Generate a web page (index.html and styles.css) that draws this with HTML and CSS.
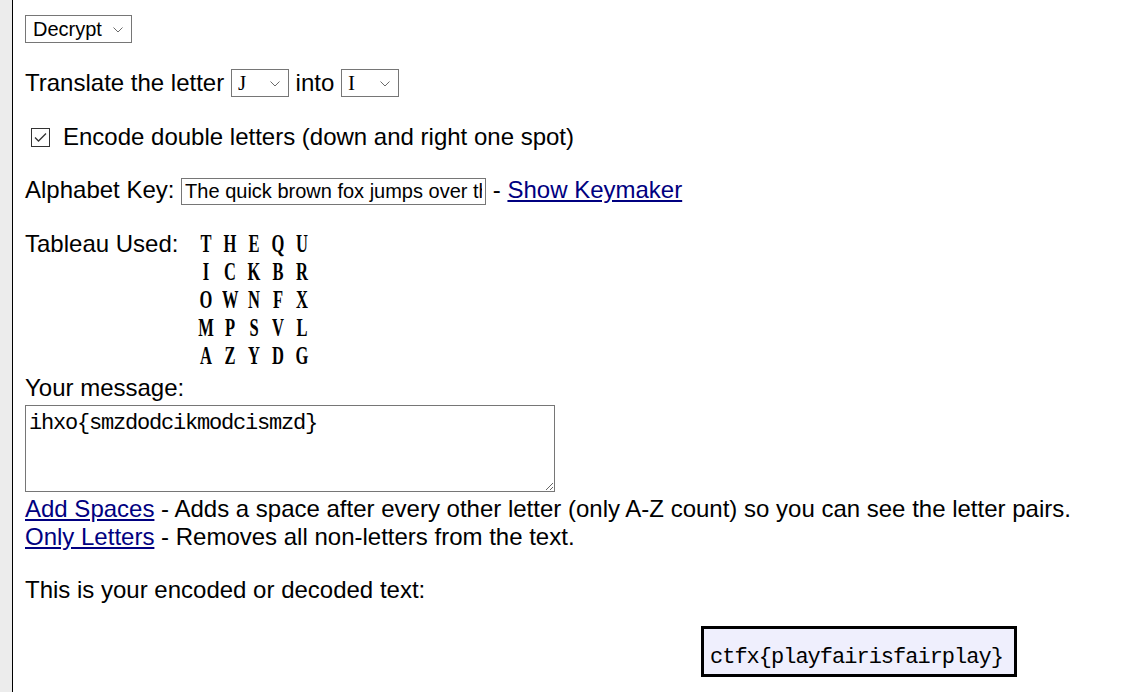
FILE: index.html
```html
<!DOCTYPE html>
<html lang="en">
<head>
<meta charset="utf-8">
<title>Playfair Cipher</title>
<link rel="stylesheet" href="styles.css">
</head>
<body>
<div class="page">
  <div class="rail"></div>
  <main class="content">
    <div class="row r-mode"><span class="sel w-mode"><select class="ctl"><option>Encrypt</option><option selected>Decrypt</option></select><svg class="chev" viewBox="0 0 10 6" width="10" height="6"><polyline points="0.5,0.5 5,5 9.5,0.5" fill="none" stroke="#6b6b6b" stroke-width="1"/></svg></span></div>

    <div class="row r-translate">Translate the letter <span class="sel w-letter"><select class="ctl mono"><option>I</option><option selected>J</option><option>Q</option></select><svg class="chev" viewBox="0 0 10 6" width="10" height="6"><polyline points="0.5,0.5 5,5 9.5,0.5" fill="none" stroke="#6b6b6b" stroke-width="1"/></svg></span> into <span class="sel w-letter"><select class="ctl mono"><option selected>I</option><option>J</option><option>K</option></select><svg class="chev" viewBox="0 0 10 6" width="10" height="6"><polyline points="0.5,0.5 5,5 9.5,0.5" fill="none" stroke="#6b6b6b" stroke-width="1"/></svg></span></div>

    <label class="row r-check"><span class="box"><svg viewBox="0 0 17 17" width="17" height="17"><polyline points="3,8.5 6.5,12 14,4.5" fill="none" stroke="#333" stroke-width="1.3"/></svg></span>Encode double letters (down and right one spot)</label>

    <div class="row r-key">Alphabet Key: <input class="key" type="text" value="The quick brown fox jumps over the lazy dog"> - <a href="#">Show Keymaker</a></div>

    <div class="r-tableau">
      <span class="tab-label">Tableau Used:</span>
      <div class="grid">
        <span>T</span><span>H</span><span>E</span><span>Q</span><span>U</span>
        <span>I</span><span>C</span><span>K</span><span>B</span><span>R</span>
        <span>O</span><span>W</span><span>N</span><span>F</span><span>X</span>
        <span>M</span><span>P</span><span>S</span><span>V</span><span>L</span>
        <span>A</span><span>Z</span><span>Y</span><span>D</span><span>G</span>
      </div>
    </div>

    <div class="msg-label">Your message:</div>
    <textarea class="msg">ihxo{smzdodcikmodcismzd}</textarea>

    <div class="help">
      <a href="#">Add Spaces</a> - Adds a space after every other letter (only A-Z count) so you can see the letter pairs.<br>
      <a href="#">Only Letters</a> - Removes all non-letters from the text.
    </div>

    <div class="result-label">This is your encoded or decoded text:</div>
    <div class="result">ctfx{playfairisfairplay}</div>
  </main>
</div>
</body>
</html>
```

FILE: styles.css
```css
html, body {
  margin: 0;
  padding: 0;
  background: #fff;
}

body {
  font-family: "Liberation Sans", Arial, sans-serif;
  font-size: 24px;
  line-height: 28px;
  color: #000;
}

.page {
  display: flex;
  min-height: 100vh;
}

.rail {
  flex: none;
  width: 12px;
  background: #ececec;
  border-right: 1px solid #000;
}

.content {
  flex: 1;
  padding: 0 0 30px 12px;
}

a {
  color: #000080;
  text-decoration: underline;
}

.row {
  display: block;
  height: 28px;
  white-space: nowrap;
}

.r-mode { margin-top: 15px; }
.r-translate { margin-top: 26px; }
.r-check { margin-top: 26px; }
.r-key { margin-top: 25px; height: 30px; }

.sel {
  position: relative;
  display: inline-block;
  vertical-align: top;
  height: 28px;
}

.w-mode { width: 107px; }
.w-letter { width: 58px; }

.ctl {
  -webkit-appearance: none;
  appearance: none;
  display: block;
  box-sizing: border-box;
  width: 100%;
  height: 28px;
  margin: 0;
  padding: 0 0 0 7px;
  border: 1px solid #767676;
  border-radius: 0;
  background: #fff;
  color: #000;
  font-family: "Liberation Sans", Arial, sans-serif;
  font-size: 20px;
  outline: none;
}

.ctl.mono {
  font-family: "Liberation Serif", "Times New Roman", serif;
  font-size: 21px;
  padding-left: 6px;
}

.chev {
  position: absolute;
  right: 9px;
  top: 12px;
  pointer-events: none;
}

.box {
  display: inline-block;
  vertical-align: top;
  box-sizing: border-box;
  width: 19px;
  height: 19px;
  margin: 5px 13px 0 6px;
  border: 1px solid #333;
  background: #fff;
}

.box svg {
  display: block;
}

.key {
  display: inline-block;
  vertical-align: top;
  box-sizing: border-box;
  width: 305px;
  height: 27px;
  margin: 2px 0 0;
  padding: 0 3px;
  border: 1px solid #767676;
  border-radius: 0;
  font-family: "Liberation Sans", Arial, sans-serif;
  font-size: 20px;
  color: #000;
  outline: none;
}

.r-tableau {
  display: flex;
  margin-top: 24px;
}

.tab-label {
  flex: none;
  width: 169px;
}

.grid {
  display: grid;
  grid-template-columns: repeat(5, 24px);
  grid-auto-rows: 28px;
  font-family: "Liberation Serif", "Times New Roman", serif;
  font-weight: bold;
  font-size: 25px;
  line-height: 28px;
  text-align: center;
}

.grid span {
  display: block;
  transform: scaleX(0.66);
}

.msg-label {
  margin-top: 4px;
}

.msg {
  display: block;
  box-sizing: border-box;
  width: 530px;
  height: 87px;
  margin: 3px 0 0;
  padding: 4px 3px 2px;
  border: 1px solid #767676;
  border-radius: 0;
  font-family: "Liberation Mono", "Courier New", monospace;
  font-size: 22px;
  letter-spacing: -1.2px;
  line-height: 28px;
  color: #000;
  resize: both;
  outline: none;
}

.help {
  margin-top: 3px;
  white-space: nowrap;
}

.result-label {
  margin-top: 25px;
}

.result {
  box-sizing: border-box;
  width: 316px;
  height: 51px;
  margin: 22px 0 0 676px;
  padding: 17px 0 0 6px;
  border: 3px solid #000;
  background: #efeffd;
  font-family: "Liberation Mono", "Courier New", monospace;
  font-size: 22px;
  letter-spacing: -1px;
  line-height: 24px;
  white-space: nowrap;
}
```
